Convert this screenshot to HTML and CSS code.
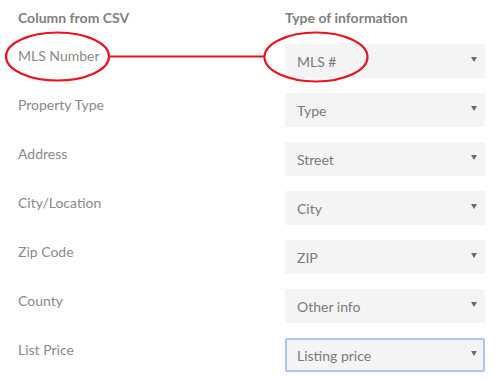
FILE: index.html
```html
<!DOCTYPE html>
<html lang="en">
<head>
    <meta charset="UTF-8">
    <meta name="viewport" content="width=device-width, initial-scale=1.0">
    <title>Map CSV columns</title>
    <link rel="stylesheet" href="styles.css">
</head>
<body>
    <div class="mapper">
        <div class="mapper-head">Column from CSV</div>
        <div class="mapper-head">Type of information</div>

        <div class="csv-col">MLS Number</div>
        <div class="pick"><select><option>MLS #</option></select></div>

        <div class="csv-col">Property Type</div>
        <div class="pick"><select><option>Type</option></select></div>

        <div class="csv-col">Address</div>
        <div class="pick"><select><option>Street</option></select></div>

        <div class="csv-col">City/Location</div>
        <div class="pick"><select><option>City</option></select></div>

        <div class="csv-col">Zip Code</div>
        <div class="pick"><select><option>ZIP</option></select></div>

        <div class="csv-col">County</div>
        <div class="pick"><select><option>Other info</option></select></div>

        <div class="csv-col">List Price</div>
        <div class="pick is-focused"><select><option>Listing price</option></select></div>
    </div>

    <!-- hand-drawn annotation over the first row -->
    <svg class="markup" width="500" height="380" viewBox="0 0 500 380">
        <ellipse cx="57.5" cy="56.5" rx="51.5" ry="24" />
        <line x1="109" y1="56.5" x2="265" y2="56.5" />
        <ellipse cx="316" cy="57" rx="51.5" ry="24.5" />
    </svg>
</body>
</html>
```

FILE: styles.css
```css
body {
    margin: 0;
    font-family: Lato, "Open Sans", Arial, sans-serif;
    background: #fff;
}
.mapper {
    display: grid;
    grid-template-columns: 267px 200px;
    row-gap: 15px;
    padding: 7px 0 0 18px;
}
.mapper-head {
    height: 22px;
    line-height: 22px;
    font-size: 14px;
    font-weight: bold;
    color: #808080;
}
.csv-col {
    padding-top: 2px;
    line-height: 20px;
    font-size: 14px;
    color: #8a8a8a;
}
.pick {
    position: relative;
    height: 34px;
}
.pick select {
    -webkit-appearance: none;
    appearance: none;
    width: 100%;
    height: 34px;
    margin: 0;
    padding: 0 0 0 12px;
    border: none;
    border-radius: 0;
    background: #f4f4f4;
    font-family: inherit;
    font-size: 14px;
    color: #7a7a7a;
    outline: none;
}
.pick::after {
    content: "";
    position: absolute;
    left: 186px;
    top: 13px;
    border-left: 3px solid transparent;
    border-right: 3px solid transparent;
    border-top: 5px solid #6a6a6a;
    pointer-events: none;
}
.pick.is-focused select {
    border: 2px solid #a8c6f7;
    border-radius: 2px;
    padding-left: 10px;
}
.markup {
    position: absolute;
    left: 0;
    top: 0;
    fill: none;
    stroke: #e8141f;
    stroke-width: 2.2;
}
```
